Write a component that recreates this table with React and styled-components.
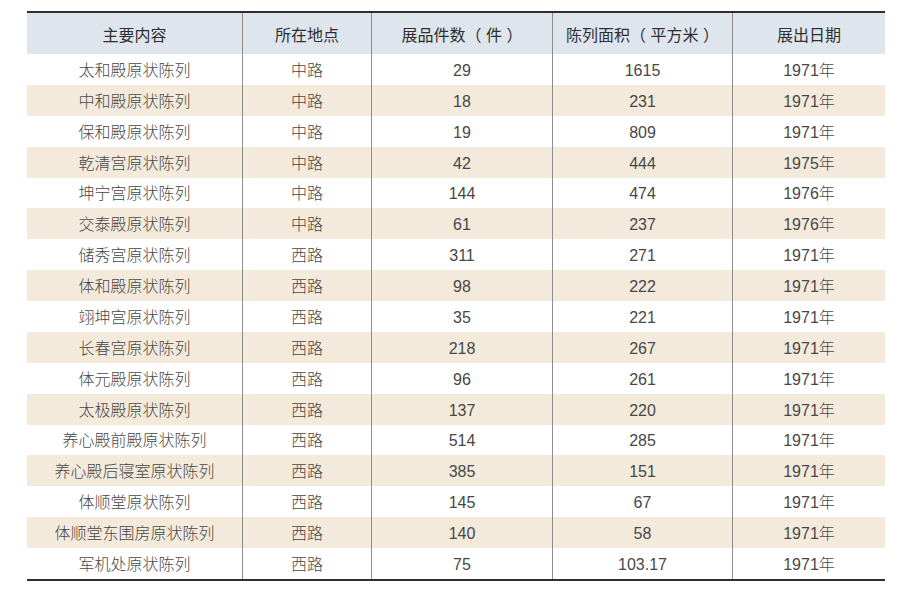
import React from 'react';
import styled, { createGlobalStyle } from 'styled-components';

const GlobalStyle = createGlobalStyle`
  body {
    margin: 0;
    background: #fff;
    font-family: "Liberation Sans", "Noto Sans CJK SC", sans-serif;
  }
`;

const Page = styled.div`
  padding: 11px 0 0 27px;
`;

const Table = styled.div`
  width: 858px;
  display: grid;
  grid-template-columns: 215px 129px 181px 180px 153px;
  grid-template-rows: 41px;
  grid-auto-rows: 30.88px;
  border-top: 2px solid #2e2e2e;
  border-bottom: 2px solid #2e2e2e;
`;

const BaseCell = styled.div`
  display: flex;
  align-items: center;
  justify-content: center;
  font-size: 16px;
  line-height: 1;
  white-space: nowrap;
  border-left: 1px solid #8d8d8d;
  &:nth-child(5n + 1) { border-left: none; }
`;

const HeadCell = styled(BaseCell)`
  padding-top: 4px;
  background: #dfe5ec;
  color: #2f2f2f;
  font-weight: 400;
`;

const Cell = styled(BaseCell)`
  padding-top: 3px;
  background: ${(props) => (props.$striped ? '#f3eadb' : '#fff')};
  color: #474747;
  font-weight: 300;
`;

const columns = ['主要内容', '所在地点', '展品件数（ 件 ）', '陈列面积（ 平方米 ）', '展出日期'];

const rows = [
  ['太和殿原状陈列', '中路', '29', '1615', '1971年'],
  ['中和殿原状陈列', '中路', '18', '231', '1971年'],
  ['保和殿原状陈列', '中路', '19', '809', '1971年'],
  ['乾清宫原状陈列', '中路', '42', '444', '1975年'],
  ['坤宁宫原状陈列', '中路', '144', '474', '1976年'],
  ['交泰殿原状陈列', '中路', '61', '237', '1976年'],
  ['储秀宫原状陈列', '西路', '311', '271', '1971年'],
  ['体和殿原状陈列', '西路', '98', '222', '1971年'],
  ['翊坤宫原状陈列', '西路', '35', '221', '1971年'],
  ['长春宫原状陈列', '西路', '218', '267', '1971年'],
  ['体元殿原状陈列', '西路', '96', '261', '1971年'],
  ['太极殿原状陈列', '西路', '137', '220', '1971年'],
  ['养心殿前殿原状陈列', '西路', '514', '285', '1971年'],
  ['养心殿后寝室原状陈列', '西路', '385', '151', '1971年'],
  ['体顺堂原状陈列', '西路', '145', '67', '1971年'],
  ['体顺堂东围房原状陈列', '西路', '140', '58', '1971年'],
  ['军机处原状陈列', '西路', '75', '103.17', '1971年'],
];

export default function App() {
  return (
    <>
      <GlobalStyle />
      <Page>
        <Table>
          {columns.map((c) => (
            <HeadCell key={c}>{c}</HeadCell>
          ))}
          {rows.map((r, i) =>
            r.map((v, j) => (
              <Cell key={`${i}-${j}`} $striped={i % 2 === 1}>
                {v}
              </Cell>
            ))
          )}
        </Table>
      </Page>
    </>
  );
}
